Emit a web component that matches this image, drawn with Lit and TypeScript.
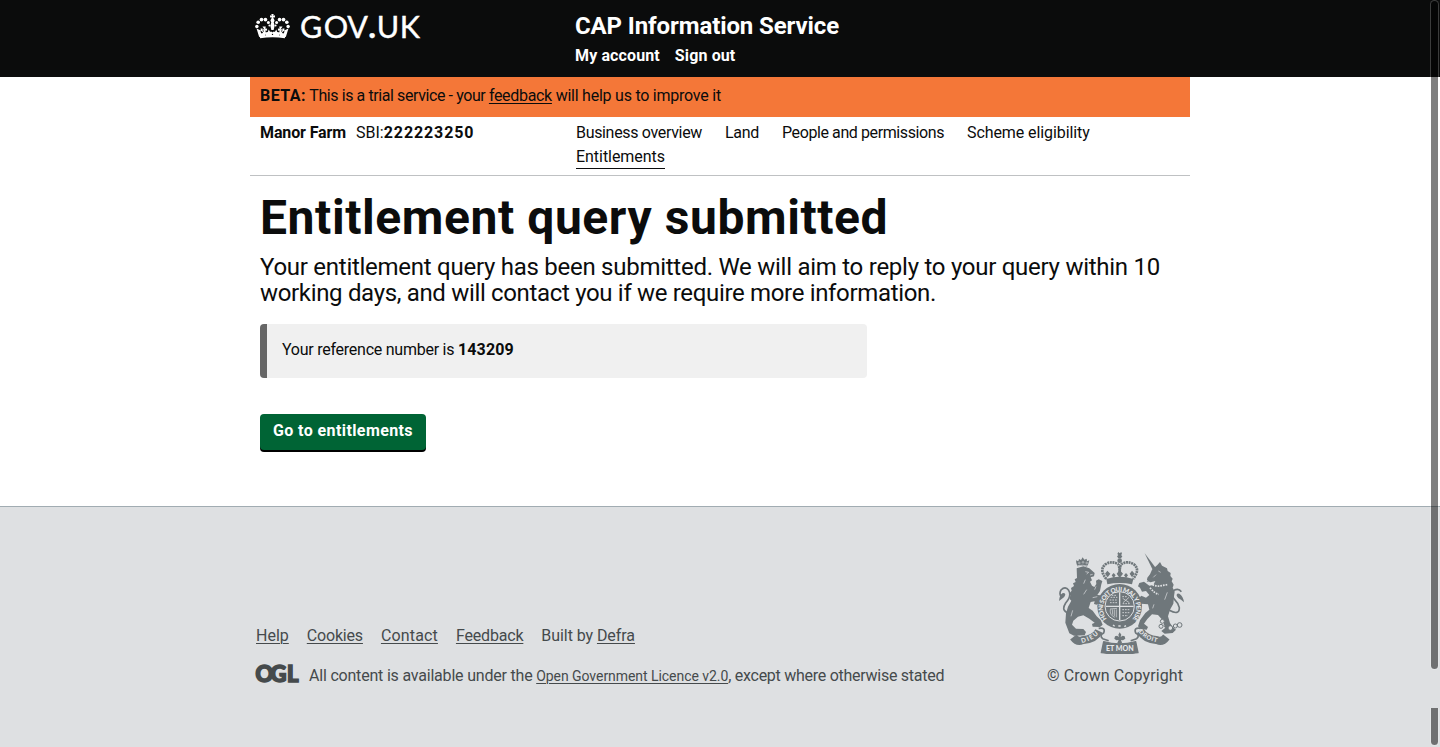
import { LitElement, html, css, svg } from "lit";
import { customElement } from "lit/decorators.js";

const crown = html`<svg class="crown" viewBox="0 0 105 76" aria-label="Crown">
  <g fill="#fff">
    <path d="M49 0h7l-1 5 5-1v7l-5-1 1 5h-7l1-5-5 1V4l5 1z" />
    <circle cx="52.500" cy="20" r="6" />
    <path d="M49 24h7l3 12-3 13h-7l-3-13z" />
    ${[0, 1].map(
      (i) => svg`<g transform=${i ? "translate(105 0) scale(-1 1)" : ""}>
        <circle cx="5" cy="38" r="5.200" /><circle cx="9" cy="25" r="5.500" />
        <circle cx="19" cy="17" r="5.600" /><circle cx="31" cy="17" r="5.600" />
        <circle cx="40" cy="26" r="4.600" /><circle cx="43" cy="35" r="3" />
        <path d="M4 44l8 26 8-2-4-17 8 4 2-7-5 2 1-6h-6l1 6z" />
        <path d="M22 38h10l-1 7 5-1v7l-5-1 1 7 6-2 3-8 4 7h6v10l-21 2-14 5-2-6 11-4-4-9 5 3 1-7-5 1v-4l6 2z" />
      </g>`
    )}
    <path d="M12 60q40-9 81 0l-3 14q-37-6-75 0z" />
  </g>
  <g fill="#0b0c0c">
    <circle cx="31" cy="64" r="1.500" /><circle cx="52.500" cy="62" r="2" /><circle cx="74" cy="64" r="1.500" />
  </g>
</svg>`;

const lion = svg`
  <path d="M82 64l-3-10-1-8 7 3 2-7 6 3 5-8 5 7 7-3 1 8 7-3-3 10-4 9q-14-5-29-1z" />
  <path d="M80 70l20-6 18 6 16 14-2 10-10 3 4 9-6 4 6 12 7 4 6-9-1-10 8-4 11 5-3 10-4 20-8 12 10 1 6 9-8 11-10 8-8-2 2-8-12 2-6 18 12 8 12 17 12 11 6 14-8 7-22-1-2-8 8-4-16-12-18-10-16 4-14 12-4 12 12 12 22 1 8 9-4 10-32 1-14-7-6-16-6-16 2-28 6-20 10-18-5-5 2-11-4-4 8-10-2-8 9-6-3-8 8-4-3-8 7-4z" />
  <path d="M56 204Q32 198 47 174Q66 152 56 136Q46 122 33 135Q27 146 33 154" fill="none" stroke="#6f777b" stroke-width="5" />
  <path d="M27 168q1-16 10-23 8-4 9 4-2 8-10 12z" />`;

const unicorn = svg`
  <path d="M284 25l33 43-9 6z" />
  <path d="M306 74l16-14 8-9 6 11 15 8 2 8 9 6-1 9 7 8-3 8 6 10-3 9 6 12-2 14-2 22-10 18-6 20 6 20 8 12 10 8-10 10-24 2-10-8 12-10-8-22-14-16-18-2-14 14-10 14 12 10-4 8-18-2-8-8 6-18 16-22 12-10-4-16-20-2-10-14 10-10 14 6 10-8-10-12-12 2-6-12-6-4 4-10 14-4 16 12 12-2 6-12-14 4-12-2 2-12 8-10z" />
  <path d="M358 196Q388 212 388 188Q386 176 374 164Q360 146 372 136Q386 128 394 140" fill="none" stroke="#6f777b" stroke-width="5" />
  <path d="M402 172q-2-18-14-26-9-3-8 6 4 10 13 12z" />`;

const arms = html`<svg class="arms" viewBox="27 21 375 306" aria-label="Royal coat of arms">
  <g fill="#6f777b">
    ${lion}${unicorn}
    <path d="M205 21l4 4 5-4 2 6-3 3 4 4-4 6h-8l-4-6 4-4-3-3z" />
    <circle cx="209" cy="47" r="7" />
    <path d="M169 102q40-13 81 0l-4 16q-37-8-74 0z" />
    <path d="M172 77l-7 9 8 11 8-11zM191 84l-6 7 6 8 6-8zM209 75l-9 11 9 13 10-13zM228 84l-6 7 6 8 6-8zM246 77l-7 9 7 11 8-11z" />
    <circle cx="209" cy="184" r="67" />
    <path d="M205 269l4-7 5 7-2 7 6-4 6 2 2 7-7 5-6-1 3 8-7 7-7-7 4-8-7 1-6-5 2-7 6-2 6 4z" />
  </g>
  <g fill="none" stroke="#6f777b">
    <path d="M169 102q-22-27-4-43 19-13 38-2 6 4 6 28 0-24 6-28 20-11 38 2 18 16-4 43" stroke-width="8" stroke-dasharray="6 2" />
    <g stroke-width="3">
      <circle cx="337" cy="229" r="6" fill="#dee0e2" /><circle cx="333" cy="244" r="6" fill="#dee0e2" /><circle cx="348" cy="241" r="6" />
      <circle cx="361" cy="249" r="7" fill="#dee0e2" /><circle cx="376" cy="243" r="6" /><circle cx="389" cy="240" r="7" />
    </g>
  </g>
  <g fill="none" stroke="#dee0e2">
    <circle cx="209" cy="184" r="44" stroke-width="3" />
    <path d="M209 142v84M167 184h84" stroke-width="4" />
    <path d="M182 157h20M179 165h23M180 173h22M185 151h14M217 155h15M218 176h24M217 194h22M217 203h21M217 212h17" stroke-width="2.500" stroke-dasharray="5 3" />
    <path d="M218 160l20 13M219 173l18-16" stroke-width="2" />
    <path d="M181 193q-3 17 13 24M187 193l1 16M193 193v21M199 193v24M180 192l21-2" stroke-width="2" />
    <path d="M106 80l10 2-6 5M120 90l8-2M106 104l-5 12M110 134l-9 14M68 196l-5 18M138 124l-4 10M128 158l14-3" stroke-width="2" />
    <path d="M288 105q20 20 40 18l24-4M300 128q12 16 26 20" stroke-width="5" stroke-dasharray="5 3" />
    <path d="M325 78l7 4M318 89l-8 8M352 142l-8 22M312 178l-4 12" stroke-width="2" />
    <path d="M82 62q16-3 31 1" stroke-width="2" />
    <circle cx="88" cy="54" r="2.500" stroke-width="1.500" /><circle cx="99" cy="52" r="2.500" stroke-width="1.500" /><circle cx="110" cy="54" r="2.500" stroke-width="1.500" />
  </g>
  <path d="M189 240l5 4M205 243h7M228 242l-5 3" stroke="#dee0e2" stroke-width="4" />
  <g fill="none" stroke-linejoin="round">
    <path d="M70 276Q82 292 96 286Q136 282 147 258M349 276Q337 292 323 286Q284 282 271 258" stroke="#6f777b" stroke-width="24" />
    <path d="M146 250q22-4 15 14-14 7-3 17l18 6M272 250q-22-4-15 14 14 7 3 17l-18 6" stroke="#6f777b" stroke-width="5" />
    <path d="M161 290l-7 33q55 8 110 0l-7-33q-49 14-96 0z" fill="#6f777b" stroke="#6f777b" stroke-width="4" />
  </g>
  <defs>
    <path id="garter" d="M171 222A50 50 0 1 1 247 222" />
    <path id="left" d="M95 294Q132 286 152 260" />
    <path id="right" d="M266 261Q284 286 330 294" />
  </defs>
  <g fill="#e6e8ea" font-family="Lato, sans-serif" font-weight="900">
    <text font-size="19"><textPath href="#garter" textLength="228">HONI SOIT QUI MAL Y PENSE</textPath></text>
    <text font-size="19"><textPath href="#left" textLength="58">DIEU</textPath></text>
    <text font-size="18"><textPath href="#right" textLength="64">DROIT</textPath></text>
    <text x="168" y="319" font-size="20" textLength="83" lengthAdjust="spacingAndGlyphs">ET MON</text>
  </g>
</svg>`;

@customElement("app-root")
class AppRoot extends LitElement {
  static styles = css`
    :host { display: block; position: relative; height: 747px; overflow: hidden; background: #fff; color: #0b0c0c; font: 16px/20px Roboto, sans-serif; }
    * { box-sizing: border-box; }
    h1, p { margin: 0; }
    a { color: inherit; text-underline-offset: 2px; text-decoration-thickness: 1px; }
    .wrap { width: 940px; margin: 0 auto; }
    header { height: 77px; background: #0b0c0c; color: #fff; }
    header .wrap { display: flex; }
    .brand { width: 325px; padding: 7px 0 0 5px; display: flex; }
    .crown { width: 35px; height: 25px; margin-top: 7px; }
    .word { width: 130px; height: 42px; margin-left: 5px; overflow: visible; }
    .head { padding-top: 11px; }
    .service { font-size: 24px; line-height: 30px; font-weight: 700; letter-spacing: -0.106px; }
    .account { display: flex; gap: 15px; margin-top: 5px; font-weight: 700; letter-spacing: 0.12px; }
    header a, nav a { text-decoration: none; white-space: nowrap; }
    .beta { height: 40px; padding: 9px 10px; background: #f47738; white-space: pre; letter-spacing: -0.41px; }
    .beta b { letter-spacing: 0.46px; }
    .beta a { letter-spacing: -0.317px; }
    .beta .end { letter-spacing: -0.237px; }
    .business { display: flex; height: 59px; padding: 4px 10px 0; border-bottom: 1px solid #bfc1c3; line-height: 24px; }
    .farm { width: 316px; display: flex; }
    .farm .name { letter-spacing: -0.12px; margin-right: 10px; }
    .farm .num { letter-spacing: 0.9px; }
    nav { display: flex; flex-wrap: wrap; column-gap: 23px; flex: 1; align-content: flex-start; }
    .n1 { letter-spacing: -0.329px; } .n2 { letter-spacing: -0.295px; } .n3 { letter-spacing: -0.404px; } .n4 { letter-spacing: -0.09px; }
    .n5 { letter-spacing: -0.042px; height: 24px; border-bottom: 1px solid #0b0c0c; }
    main { padding: 17px 10px 0; height: 330px; }
    h1 { font-size: 48px; line-height: 50px; letter-spacing: 0.58px; }
    .lede { margin-top: 11px; font-size: 24px; line-height: 26px; white-space: nowrap; }
    .l1 { letter-spacing: -0.264px; } .l2 { letter-spacing: -0.332px; }
    .ref { width: 607px; height: 54px; margin-top: 18px; padding: 16px 15px; background: #f0f0f0; border-left: 7px solid #666; border-radius: 4px; letter-spacing: -0.25px; }
    .ref b { letter-spacing: 0.154px; }
    button { display: block; margin-top: 36px; width: 166px; height: 36px; padding: 0 0 3px; border: 0; border-radius: 4px; background: #006435; box-shadow: 0 2px 0 #000; color: #fff; font: 700 16px/20px Roboto, sans-serif; letter-spacing: 0.401px; white-space: nowrap; }
    footer { height: 241px; border-top: 1px solid #a1acb2; background: #dee0e2; color: #454a4c; }
    footer .wrap { display: flex; justify-content: space-between; padding: 45px 6px 0; }
    .links { display: flex; gap: 18px; margin-top: 74px; }
    .tight { letter-spacing: -0.18px; }
    .loose { letter-spacing: 0.154px; }
    .built { letter-spacing: -0.07px; }
    .licence { display: flex; margin-top: 17px; white-space: pre; }
    .ogl { width: 44px; height: 22px; margin: 0 9px 0 0; overflow: visible; }
    .licence p { margin-top: 3px; letter-spacing: -0.2px; }
    .licence a { font-size: 14px; letter-spacing: -0.053px; }
    .licence .tail { letter-spacing: -0.266px; }
    .crest { display: flex; flex-direction: column; align-items: flex-end; }
    .arms { width: 125px; height: 102px; }
    .crest a { margin: 12px 1px 0 0; text-decoration: none; letter-spacing: 0.087px; }
    .bar, .bar2 { position: absolute; right: 1px; width: 9px; background: rgba(0, 0, 0, 0.5); border: 1px solid rgba(255, 255, 255, 0.2); background-clip: padding-box; border-radius: 5px; }
    .bar { top: 0; height: 670px; }
    .bar2 { top: 708px; height: 38px; border-top: 0; border-radius: 0 0 5px 5px; }
  `;

  render() {
    return html`
      <header><div class="wrap">
        <div class="brand">
          ${crown}
          <svg class="word" viewBox="295 7 130 42">
            <text y="37.700" x="300 323.800 347.300 368.400 376.800 399.800" fill="#fff" stroke="#fff" stroke-width="0.400" font-family="Lato, sans-serif" font-size="30.500">GOV<tspan font-weight="900">.</tspan>UK</text>
          </svg>
        </div>
        <div class="head">
          <div class="service">CAP Information Service</div>
          <div class="account"><a href="#">My account</a><a href="#">Sign out</a></div>
        </div>
      </div></header>
      <div class="wrap">
        <div class="beta"><b>BETA:</b> This is a trial service - your <a href="#">feedback</a><span class="end"> will help us to improve it</span></div>
        <div class="business">
          <div class="farm"><b class="name">Manor Farm</b><span>SBI:</span><b class="num">222223250</b></div>
          <nav>
            <a class="n1" href="#">Business overview</a><a class="n2" href="#">Land</a><a class="n3" href="#">People and permissions</a><a class="n4" href="#">Scheme eligibility</a><a class="n5" href="#">Entitlements</a>
          </nav>
        </div>
        <main>
          <h1>Entitlement query submitted</h1>
          <p class="lede"><span class="l1">Your entitlement query has been submitted. We will aim to reply to your query within 10</span><br /><span class="l2">working days, and will contact you if we require more information.</span></p>
          <p class="ref">Your reference number is <b>143209</b></p>
          <button>Go to entitlements</button>
        </main>
      </div>
      <footer><div class="wrap">
        <div>
          <div class="links"><a href="#">Help</a><a class="tight" href="#">Cookies</a><a class="loose" href="#">Contact</a><a class="tight" href="#">Feedback</a><span class="built">Built by <a href="#">Defra</a></span></div>
          <div class="licence">
            <svg class="ogl" viewBox="0 0 44 22"><text x="-0.500 14.500 31" y="18.500" font-family="Lato, sans-serif" font-weight="900" font-size="22" fill="#454a4c" stroke="#454a4c" stroke-width="1.600">OGL</text></svg>
            <p>All content is available under the <a href="#">Open Government Licence v2.0</a><span class="tail">, except where otherwise stated</span></p>
          </div>
        </div>
        <div class="crest">${arms}<a href="#">© Crown Copyright</a></div>
      </div></footer>
      <div class="bar"></div><div class="bar2"></div>
    `;
  }
}
